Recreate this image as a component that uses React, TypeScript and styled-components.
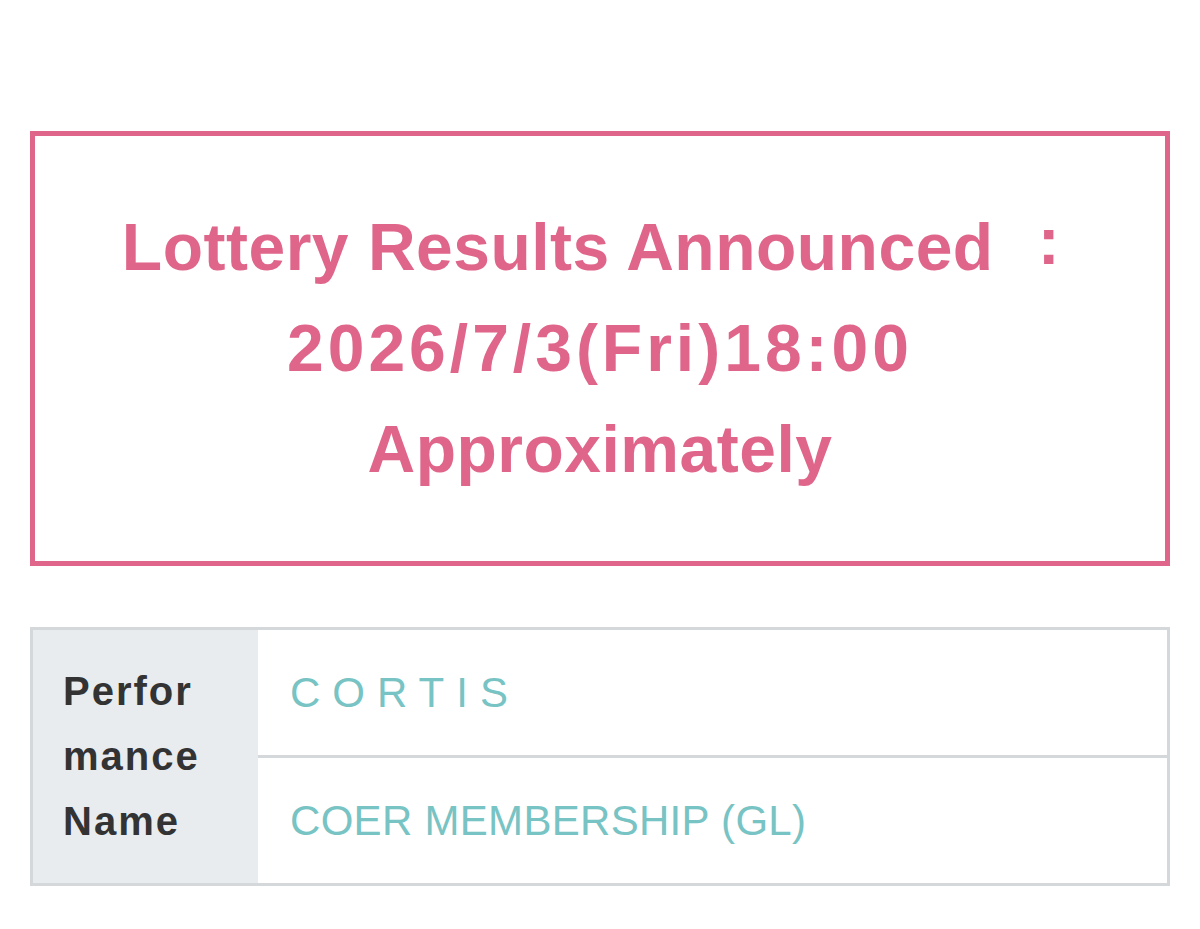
import styled, { createGlobalStyle } from "styled-components";

const GlobalStyle = createGlobalStyle`
  html, body {
    margin: 0;
    padding: 0;
    background: #ffffff;
  }

  body {
    font-family: "Liberation Sans", Arial, "Noto Sans CJK JP", sans-serif;
  }
`;

const Page = styled.div`
  width: 1200px;
  padding: 131px 30px 40px;
  box-sizing: border-box;
  display: flex;
  flex-direction: column;
  gap: 61px;
`;

const Notice = styled.div`
  border: 5px solid #e0658a;
  padding: 61px 20px;
  text-align: center;
`;

const NoticeLine = styled.div<{ $spread?: number }>`
  color: #e0658a;
  font-size: 66px;
  font-weight: 700;
  line-height: 101px;
  white-space: nowrap;
  letter-spacing: ${(p) => p.$spread ?? 0.5}px;
`;

const Colon = styled.span`
  display: inline-block;
  margin: 0 18px 0 44px;
  transform: translateY(-6px);
`;

const InfoTable = styled.div`
  display: grid;
  grid-template-columns: 225px 1fr;
  border: 3px solid #d4d8da;
`;

const LabelCell = styled.div`
  grid-row: span 2;
  background: #e9ecee;
  color: #333333;
  font-size: 40px;
  font-weight: 700;
  letter-spacing: 2px;
  line-height: 65px;
  padding: 0 50px 0 30px;
  display: flex;
  align-items: center;
  word-break: break-all;
`;

const ValueCell = styled.div<{ $last?: boolean }>`
  height: 125px;
  display: flex;
  align-items: center;
  padding-left: 32px;
  border-bottom: ${(p) => (p.$last ? "none" : "3px solid #d4d8da")};
`;

const ValueText = styled.span<{ $spaced?: boolean }>`
  color: #78c3c4;
  font-size: 42px;
  letter-spacing: ${(p) => (p.$spaced ? "12px" : "0.3px")};
`;

export default function App() {
  return (
    <>
      <GlobalStyle />
      <Page>
        <Notice>
          <NoticeLine>
            Lottery Results Announced<Colon>:</Colon>
          </NoticeLine>
          <NoticeLine $spread={4}>2026/7/3(Fri)18:00</NoticeLine>
          <NoticeLine>Approximately</NoticeLine>
        </Notice>
        <InfoTable>
          <LabelCell>Performance Name</LabelCell>
          <ValueCell>
            <ValueText $spaced>CORTIS</ValueText>
          </ValueCell>
          <ValueCell $last>
            <ValueText>COER MEMBERSHIP (GL)</ValueText>
          </ValueCell>
        </InfoTable>
      </Page>
    </>
  );
}
